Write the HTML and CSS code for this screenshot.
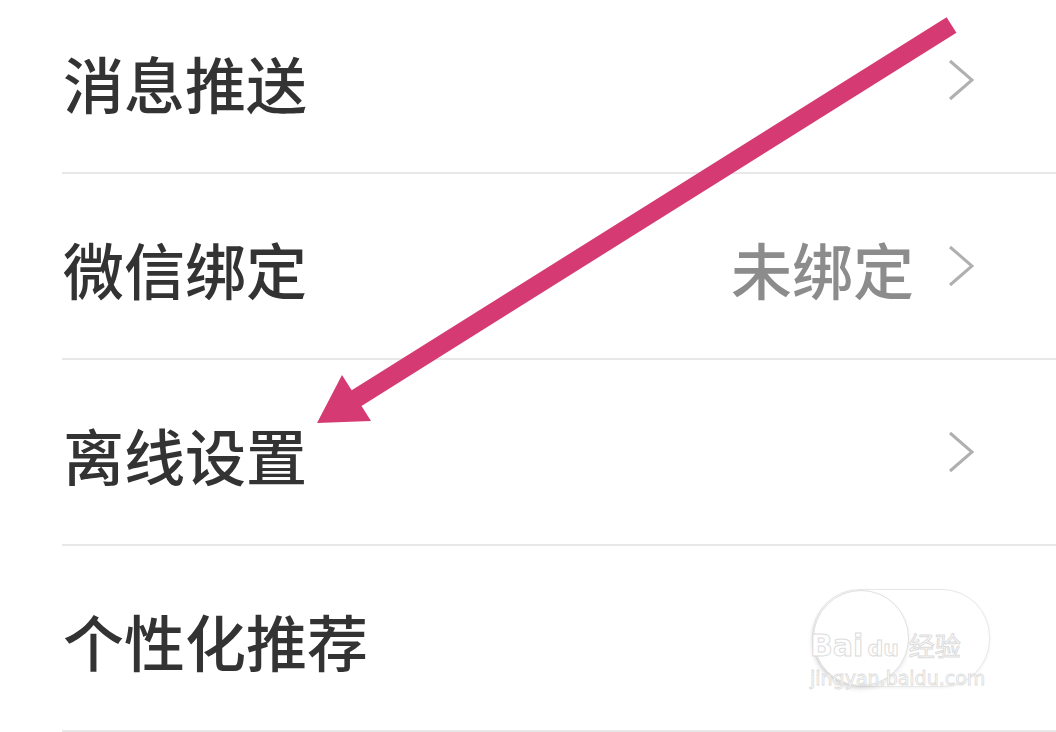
FILE: index.html
```html
<!DOCTYPE html>
<html lang="zh-CN">
<head>
<meta charset="utf-8">
<title>设置</title>
<link rel="stylesheet" href="styles.css">
</head>
<body>
<div class="page">
  <ul class="list">
    <li class="row row-first">
      <span class="label">消息推送</span>
      <span class="right">
        <svg class="chev" viewBox="0 0 26 42" width="26" height="42"><path d="M2 2 L24 21 L2 40" fill="none" stroke="#b0b0b0" stroke-width="3"/></svg>
      </span>
    </li>
    <li class="row">
      <span class="label">微信绑定</span>
      <span class="right">
        <span class="value">未绑定</span>
        <svg class="chev" viewBox="0 0 26 42" width="26" height="42"><path d="M2 2 L24 21 L2 40" fill="none" stroke="#b0b0b0" stroke-width="3"/></svg>
      </span>
    </li>
    <li class="row">
      <span class="label">离线设置</span>
      <span class="right">
        <svg class="chev" viewBox="0 0 26 42" width="26" height="42"><path d="M2 2 L24 21 L2 40" fill="none" stroke="#b0b0b0" stroke-width="3"/></svg>
      </span>
    </li>
    <li class="row">
      <span class="label">个性化推荐</span>
      <span class="right right-toggle">
        <span class="toggle"><span class="knob"></span></span>
      </span>
    </li>
  </ul>

  <div class="watermark">
    <div class="wm-logo"><span class="wm-bai">Bai</span><span class="wm-du">du</span><span class="wm-cn">经验</span></div>
    <div class="wm-url">jingyan.baidu.com</div>
  </div>

  <svg class="arrow" viewBox="0 0 1056 732" width="1056" height="732">
    <polygon points="946.6,29.2 956.4,44.8 361.5,417.9 371,433 317,435 342,387 351.7,402.3" fill="#d63a72"/>
  </svg>
</div>
</body>
</html>
```

FILE: styles.css
```css
html, body {
  margin: 0;
  padding: 0;
  background: #ffffff;
}

body {
  width: 1056px;
  height: 732px;
  overflow: hidden;
  font-family: "Noto Sans CJK SC", "Noto Sans", sans-serif;
}

.page {
  position: relative;
  width: 1056px;
  height: 732px;
}

.list {
  list-style: none;
  margin: -12px 0 0 0;
  padding: 0 0 0 62px;
}

.row {
  display: flex;
  align-items: center;
  justify-content: space-between;
  height: 184px;
  border-bottom: 2px solid #e8e8e8;
  padding-right: 82px;
}

.label {
  font-size: 61px;
  font-weight: 500;
  line-height: 1;
  color: #333333;
  padding-left: 1px;
  position: relative;
  top: 2px;
}

.right {
  display: flex;
  align-items: center;
  gap: 34px;
}

.value {
  font-size: 61px;
  font-weight: 500;
  line-height: 1;
  color: #8c8c8c;
  position: relative;
  top: 2px;
}

.chev {
  display: block;
}

.right-toggle {
  margin-right: -16px;
}

.toggle {
  display: block;
  width: 176px;
  height: 96px;
  border-radius: 48px;
  border: 1px solid #e8e8e8;
  box-shadow: 0 1px 3px rgba(0, 0, 0, 0.06);
  position: relative;
  background: #ffffff;
}

.knob {
  position: absolute;
  left: 0;
  top: 0;
  width: 94px;
  height: 94px;
  border-radius: 50%;
  border: 1px solid #e0e0e0;
  box-shadow: -1px 3px 5px rgba(0, 0, 0, 0.1);
  background: #ffffff;
}

.watermark {
  position: absolute;
  left: 810px;
  top: 640px;
  width: 190px;
  color: #ffffff;
  font-family: "DejaVu Sans", "Noto Sans CJK SC", sans-serif;
}

.wm-logo {
  display: flex;
  align-items: baseline;
  font-size: 30px;
  line-height: 36px;
  font-weight: bold;
  -webkit-text-stroke: 1px #dcdcdc;
}

.wm-du {
  font-size: 22px;
  margin: 0 10px 0 4px;
}

.wm-cn {
  font-size: 26px;
  font-weight: normal;
}

.wm-url {
  font-size: 19px;
  line-height: 22px;
  -webkit-text-stroke: 0.8px #dcdcdc;
}

.arrow {
  position: absolute;
  left: 0;
  top: 0;
  pointer-events: none;
}
```
